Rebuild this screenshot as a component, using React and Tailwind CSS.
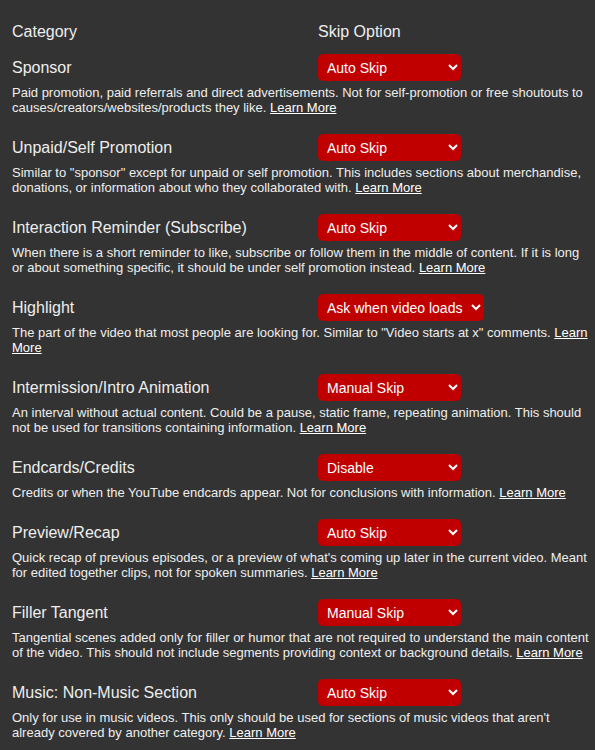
import React from 'react';

const categories = [
  {
    name: 'Sponsor',
    option: 'Auto Skip',
    desc: 'Paid promotion, paid referrals and direct advertisements. Not for self-promotion or free shoutouts to causes/creators/websites/products they like.',
  },
  {
    name: 'Unpaid/Self Promotion',
    option: 'Auto Skip',
    desc: 'Similar to "sponsor" except for unpaid or self promotion. This includes sections about merchandise, donations, or information about who they collaborated with.',
  },
  {
    name: 'Interaction Reminder (Subscribe)',
    option: 'Auto Skip',
    desc: 'When there is a short reminder to like, subscribe or follow them in the middle of content. If it is long or about something specific, it should be under self promotion instead.',
  },
  {
    name: 'Highlight',
    option: 'Ask when video loads',
    highlight: true,
    desc: 'The part of the video that most people are looking for. Similar to "Video starts at x" comments.',
  },
  {
    name: 'Intermission/Intro Animation',
    option: 'Manual Skip',
    desc: 'An interval without actual content. Could be a pause, static frame, repeating animation. This should not be used for transitions containing information.',
  },
  {
    name: 'Endcards/Credits',
    option: 'Disable',
    desc: 'Credits or when the YouTube endcards appear. Not for conclusions with information.',
  },
  {
    name: 'Preview/Recap',
    option: 'Auto Skip',
    desc: "Quick recap of previous episodes, or a preview of what's coming up later in the current video. Meant for edited together clips, not for spoken summaries.",
  },
  {
    name: 'Filler Tangent',
    option: 'Manual Skip',
    desc: 'Tangential scenes added only for filler or humor that are not required to understand the main content of the video. This should not include segments providing context or background details.',
  },
  {
    name: 'Music: Non-Music Section',
    option: 'Auto Skip',
    desc: "Only for use in music videos. This only should be used for sections of music videos that aren't already covered by another category.",
  },
];

const baseOptions = ['Disable', 'Show in Seek Bar', 'Manual Skip', 'Auto Skip'];

const SkipSelect = ({ value, highlight }) => (
  <select
    defaultValue={value}
    className={`h-[27px] rounded-[5px] border-0 bg-[#c00000] pl-[5px] pr-[2px] text-[14px] text-white outline-none ${
      highlight ? 'w-[166px]' : 'w-[143px]'
    }`}
  >
    {(highlight ? ['Disable', 'Show in Seek Bar', 'Ask when video loads'] : baseOptions).map((o) => (
      <option key={o} value={o} className="bg-white text-black">
        {o}
      </option>
    ))}
  </select>
);

export default function App() {
  return (
    <div
      className="min-h-[750px] bg-[#333333] pl-3 pr-[5px] pt-[22px] text-[#eeeeee]"
      style={{ fontFamily: '"Liberation Sans", Arial, sans-serif' }}
    >
      <div className="flex items-center text-[16px] leading-[20px]">
        <div className="w-[306px] shrink-0">Category</div>
        <div>Skip Option</div>
      </div>

      <div className="mt-[12px]">
        {categories.map((c) => (
          <div key={c.name} className="mb-[19px]">
            <div className="flex items-center">
              <div className="w-[306px] shrink-0 text-[16px] leading-[20px]">{c.name}</div>
              <SkipSelect value={c.option} highlight={c.highlight} />
            </div>
            <p className="mt-[4px] text-[13px] leading-[15px]">
              {c.desc}{' '}
              <a href="#" className="text-white underline">
                Learn More
              </a>
            </p>
          </div>
        ))}
      </div>
    </div>
  );
}
